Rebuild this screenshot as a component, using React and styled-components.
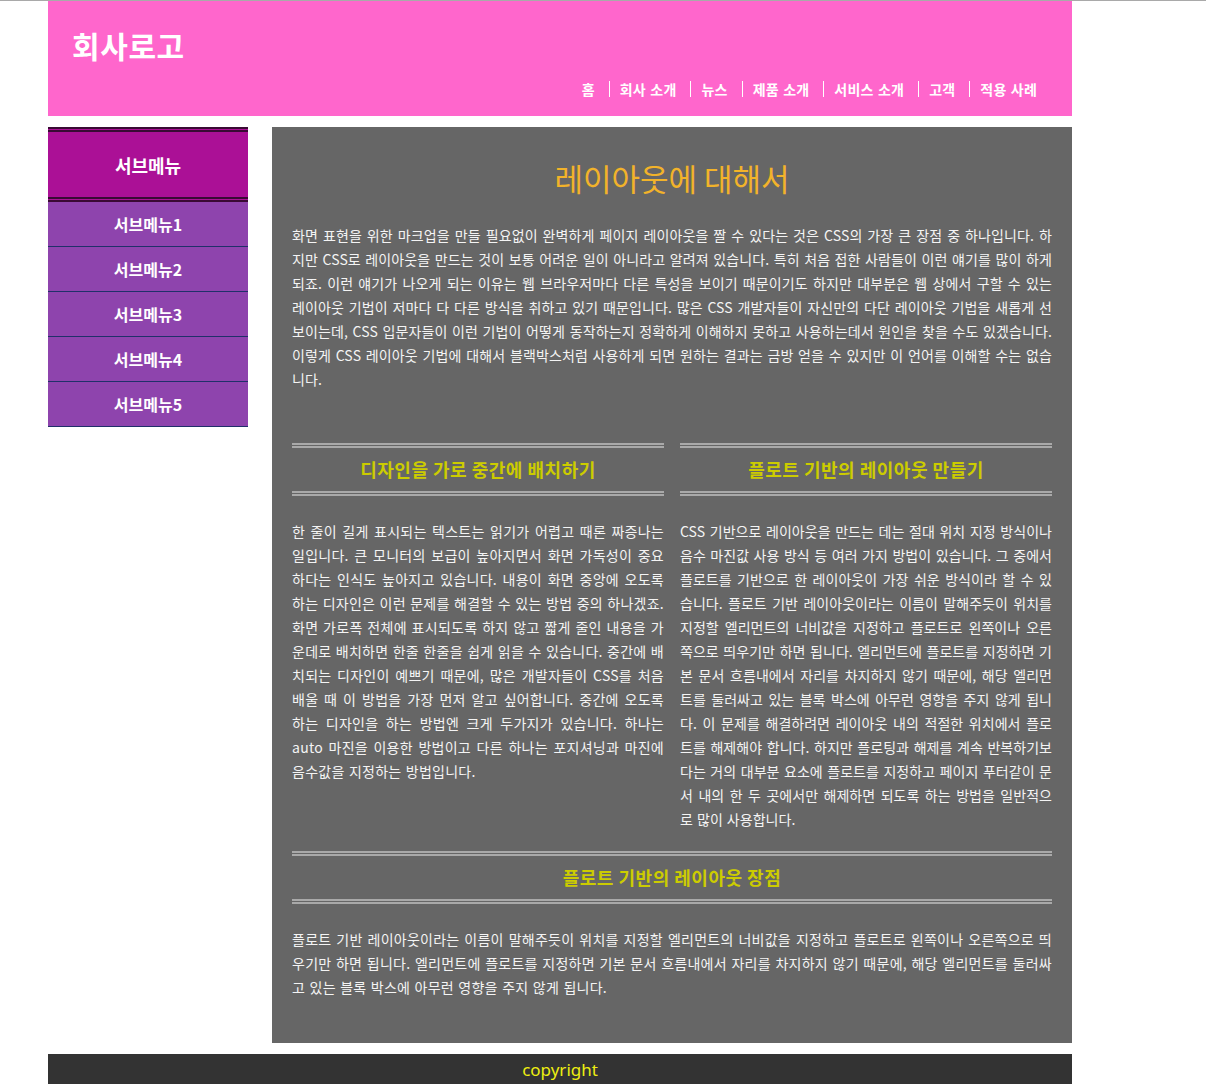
import React from "react";
import styled, { createGlobalStyle } from "styled-components";

const Global = createGlobalStyle`
  html, body { margin: 0; padding: 0; background: #fff; }
  body {
    border-top: 1px solid #a9a9a9;
    font-family: "Noto Sans CJK KR", "Noto Sans", sans-serif;
    color: #fff;
  }
  * { box-sizing: border-box; }
`;

const Page = styled.div`
  width: 1024px;
  margin-left: 48px;
`;

const Header = styled.header`
  height: 115px;
  background: #ff66cc;
  padding: 24px 25px 0 24px;
  display: flex;
  flex-direction: column;
`;

const Logo = styled.h1`
  margin: 0;
  font-size: 30px;
  line-height: 40px;
  font-weight: 700;
  letter-spacing: 0.02em;
  color: #fff;
`;

const Nav = styled.ul`
  list-style: none;
  margin: 16px 0 0;
  padding: 0;
  display: flex;
  justify-content: flex-end;
  gap: 4px;
`;

const NavItem = styled.li`
  padding: 0 10px;
  line-height: 16px;
  font-size: 14px;
  font-weight: 700;
  word-spacing: 1px;
  letter-spacing: 0.2px;
  color: #fff;
  border-left: ${(p) => (p.$first ? "none" : "1px solid #fff")};
`;

const Main = styled.div`
  display: flex;
  gap: 24px;
  margin-top: 11px;
  align-items: flex-start;
`;

const Sidebar = styled.aside`
  width: 200px;
  flex: none;
`;

const SideTitle = styled.h2`
  margin: 0;
  height: 75px;
  border-top: 5px double #3a0a34;
  border-bottom: 5px double #3a0a34;
  background: #ab1096;
  display: flex;
  align-items: center;
  justify-content: center;
  font-size: 18px;
  font-weight: 700;
  color: #fff;
`;

const SideList = styled.ul`
  list-style: none;
  margin: 0;
  padding: 0;
`;

const SideItem = styled.li`
  height: 45px;
  background: #8e44ad;
  border-bottom: 1px solid #20306a;
  display: flex;
  align-items: center;
  justify-content: center;
  font-size: 16px;
  font-weight: 700;
  color: #fff;
`;

const Content = styled.main`
  width: 800px;
  flex: none;
  background: #666666;
  padding: 20px 20px 44px;
`;

const Title = styled.h2`
  margin: 11px 0 25px;
  text-align: center;
  font-size: 31px;
  line-height: 40px;
  font-weight: 400;
  color: #f2b32a;
`;

const Text = styled.p`
  margin: ${(p) => p.$margin || "0"};
  font-size: 14px;
  line-height: 24px;
  word-spacing: ${(p) => p.$ws || "1px"};
  letter-spacing: ${(p) => p.$ls || "0.25px"};
  text-align: justify;
  color: #f4f4f4;
`;

const Columns = styled.div`
  display: grid;
  grid-template-columns: 1fr 1fr;
  gap: 16px;
  margin-top: 52px;
  align-items: start;
`;

const Section = styled.section`
  margin-top: ${(p) => p.$top || "0"};
`;

const SectionTitle = styled.h3`
  margin: 0;
  padding: 10px 0;
  border-top: 5px double #a9a9a9;
  border-bottom: 5px double #a9a9a9;
  text-align: center;
  font-size: 18px;
  line-height: 23px;
  font-weight: 700;
  letter-spacing: 0.5px;
  color: #cccc00;
`;

const Footer = styled.footer`
  margin-top: 11px;
  height: 40px;
  background: #333333;
  text-align: center;
  font-family: "Noto Sans", "Noto Sans CJK KR", sans-serif;
  font-size: 17px;
  line-height: 32px;
  color: #eeee11;
`;

const navItems = ["홈", "회사 소개", "뉴스", "제품 소개", "서비스 소개", "고객", "적용 사례"];
const subItems = ["서브메뉴1", "서브메뉴2", "서브메뉴3", "서브메뉴4", "서브메뉴5"];

export default function App() {
  return (
    <>
      <Global />
      <Page>
        <Header>
          <Logo>회사로고</Logo>
          <Nav>
            {navItems.map((n, i) => (
              <NavItem key={n} $first={i === 0}>
                {n}
              </NavItem>
            ))}
          </Nav>
        </Header>
        <Main>
          <Sidebar>
            <SideTitle>서브메뉴</SideTitle>
            <SideList>
              {subItems.map((s) => (
                <SideItem key={s}>{s}</SideItem>
              ))}
            </SideList>
          </Sidebar>
          <Content>
            <Title>레이아웃에 대해서</Title>
            <Text $ls="0.12px">
              화면 표현을 위한 마크업을 만들 필요없이 완벽하게 페이지 레이아웃을 짤 수 있다는 것은 CSS의 가장 큰 장점 중 하나입니다. 하지만 CSS로 레이아웃을 만드는 것이 보통 어려운 일이 아니라고 알려져 있습니다. 특히 처음 접한 사람들이 이런 얘기를 많이 하게 되죠. 이런 얘기가 나오게 되는 이유는 웹 브라우저마다 다른 특성을 보이기 때문이기도 하지만 대부분은 웹 상에서 구할 수 있는 레이아웃 기법이 저마다 다 다른 방식을 취하고 있기 때문입니다. 많은 CSS 개발자들이 자신만의 다단 레이아웃 기법을 새롭게 선보이는데, CSS 입문자들이 이런 기법이 어떻게 동작하는지 정확하게 이해하지 못하고 사용하는데서 원인을 찾을 수도 있겠습니다. 이렇게 CSS 레이아웃 기법에 대해서 블랙박스처럼 사용하게 되면 원하는 결과는 금방 얻을 수 있지만 이 언어를 이해할 수는 없습니다.
            </Text>
            <Columns>
              <Section>
                <SectionTitle>디자인을 가로 중간에 배치하기</SectionTitle>
                <Text $margin="23px 0 0">
                  한 줄이 길게 표시되는 텍스트는 읽기가 어렵고 때론 짜증나는 일입니다. 큰 모니터의 보급이 높아지면서 화면 가독성이 중요하다는 인식도 높아지고 있습니다. 내용이 화면 중앙에 오도록 하는 디자인은 이런 문제를 해결할 수 있는 방법 중의 하나겠죠. 화면 가로폭 전체에 표시되도록 하지 않고 짧게 줄인 내용을 가운데로 배치하면 한줄 한줄을 쉽게 읽을 수 있습니다. 중간에 배치되는 디자인이 예쁘기 때문에, 많은 개발자들이 CSS를 처음 배울 때 이 방법을 가장 먼저 알고 싶어합니다. 중간에 오도록 하는 디자인을 하는 방법엔 크게 두가지가 있습니다. 하나는 auto 마진을 이용한 방법이고 다른 하나는 포지셔닝과 마진에 음수값을 지정하는 방법입니다.
                </Text>
              </Section>
              <Section>
                <SectionTitle>플로트 기반의 레이아웃 만들기</SectionTitle>
                <Text $margin="23px 0 0" $ls="0.03px" $ws="0.9px">
                  CSS 기반으로 레이아웃을 만드는 데는 절대 위치 지정 방식이나 음수 마진값 사용 방식 등 여러 가지 방법이 있습니다. 그 중에서 플로트를 기반으로 한 레이아웃이 가장 쉬운 방식이라 할 수 있습니다. 플로트 기반 레이아웃이라는 이름이 말해주듯이 위치를 지정할 엘리먼트의 너비값을 지정하고 플로트로 왼쪽이나 오른쪽으로 띄우기만 하면 됩니다. 엘리먼트에 플로트를 지정하면 기본 문서 흐름내에서 자리를 차지하지 않기 때문에, 해당 엘리먼트를 둘러싸고 있는 블록 박스에 아무런 영향을 주지 않게 됩니다. 이 문제를 해결하려면 레이아웃 내의 적절한 위치에서 플로트를 해제해야 합니다. 하지만 플로팅과 해제를 계속 반복하기보다는 거의 대부분 요소에 플로트를 지정하고 페이지 푸터같이 문서 내의 한 두 곳에서만 해제하면 되도록 하는 방법을 일반적으로 많이 사용합니다.
                </Text>
              </Section>
            </Columns>
            <Section $top="20px">
              <SectionTitle>플로트 기반의 레이아웃 장점</SectionTitle>
              <Text $margin="23px 0 0">
                플로트 기반 레이아웃이라는 이름이 말해주듯이 위치를 지정할 엘리먼트의 너비값을 지정하고 플로트로 왼쪽이나 오른쪽으로 띄우기만 하면 됩니다. 엘리먼트에 플로트를 지정하면 기본 문서 흐름내에서 자리를 차지하지 않기 때문에, 해당 엘리먼트를 둘러싸고 있는 블록 박스에 아무런 영향을 주지 않게 됩니다.
              </Text>
            </Section>
          </Content>
        </Main>
        <Footer>copyright</Footer>
      </Page>
    </>
  );
}
